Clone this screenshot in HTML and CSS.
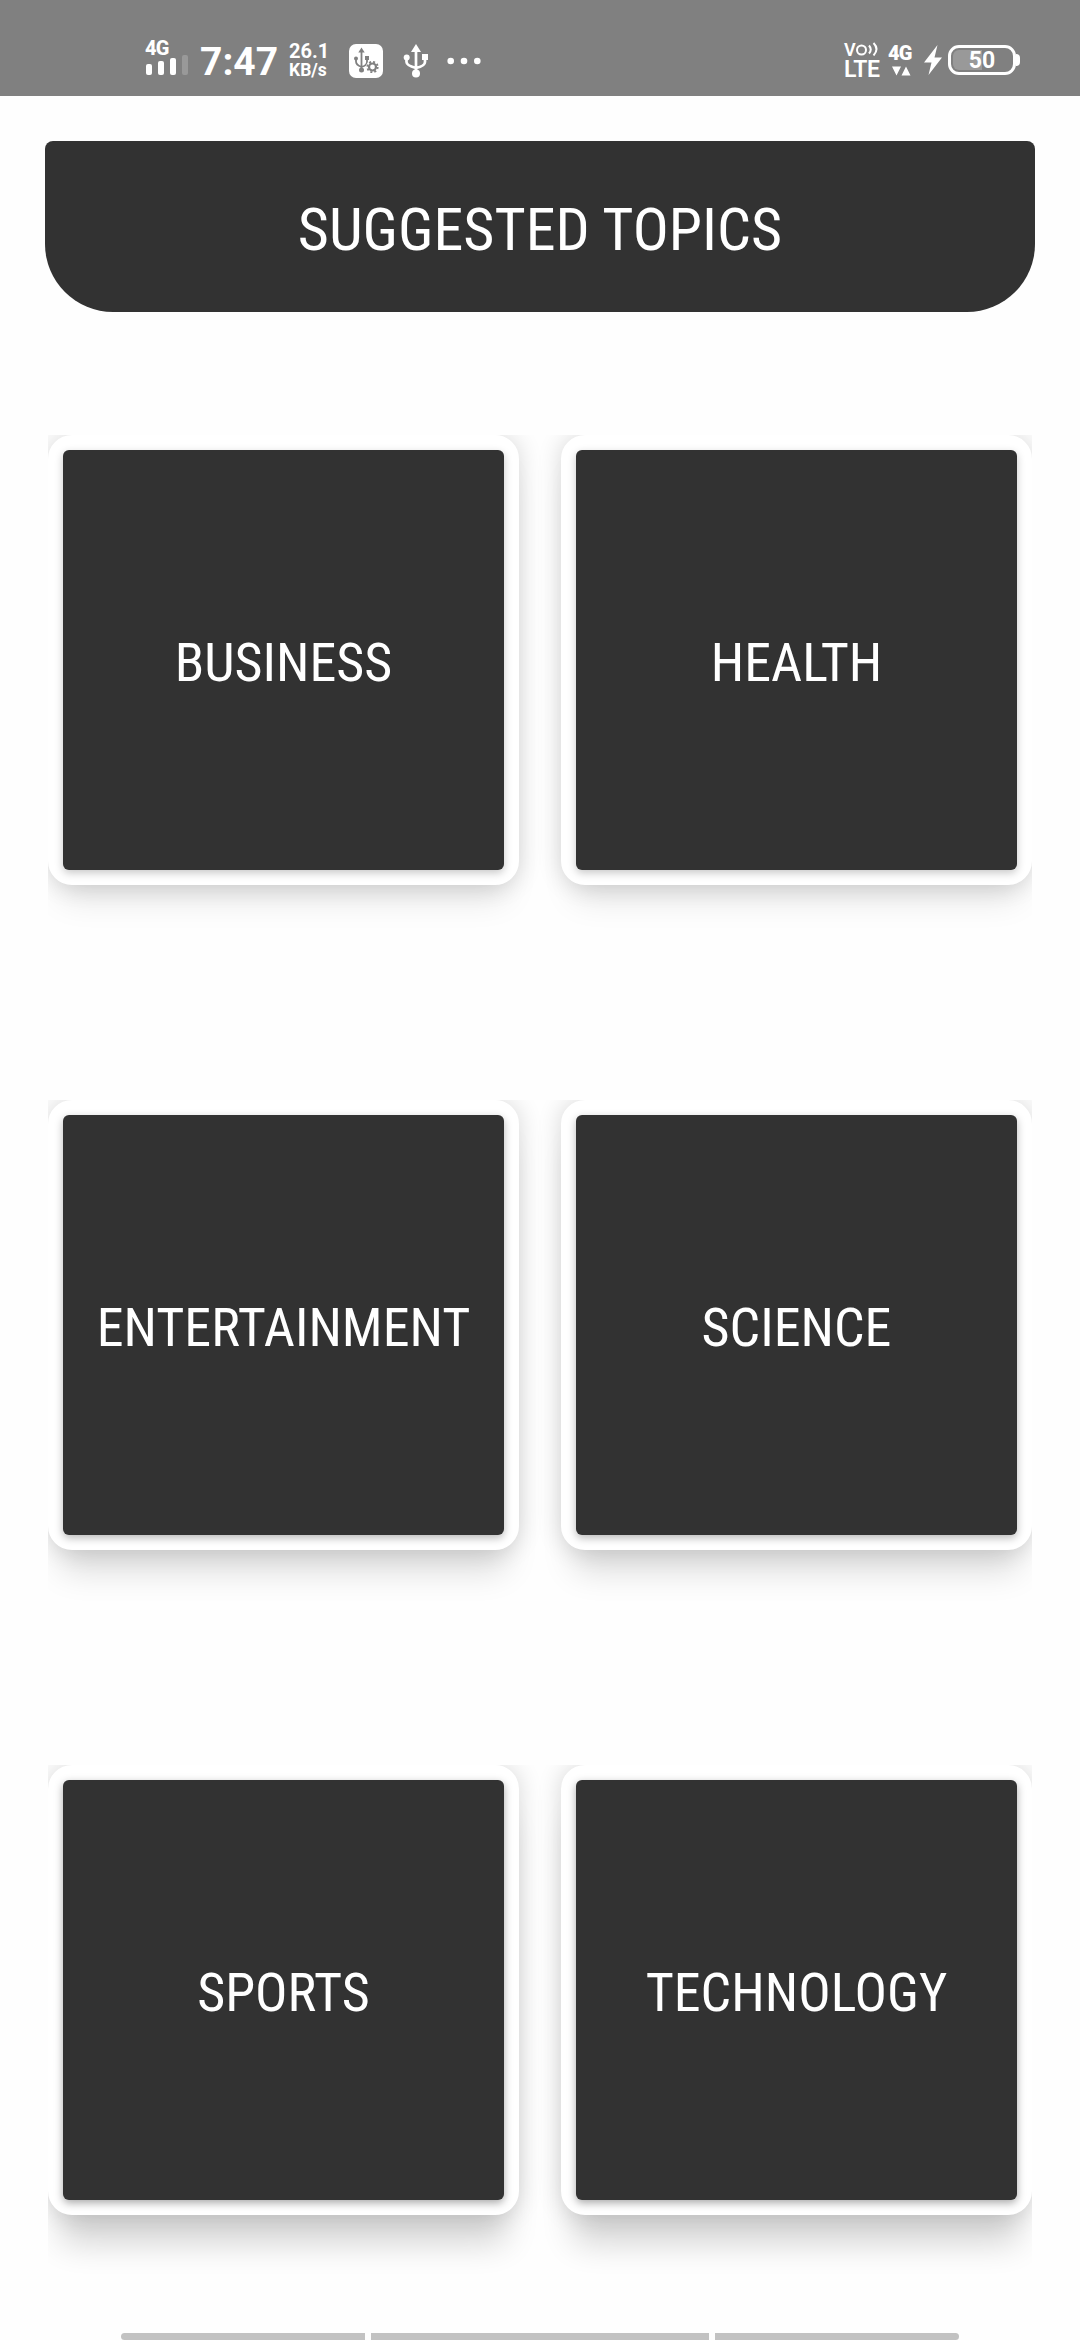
FILE: index.html
```html
<!DOCTYPE html>
<html lang="en">
<head>
<meta charset="utf-8">
<title>Suggested Topics</title>
<link rel="stylesheet" href="styles.css">
</head>
<body>
<div class="screen">
  <header class="status">
    <div class="signal">
      <span class="net">4G</span>
      <svg width="44" height="20" viewBox="0 0 44 20" fill="#fff"><rect x="1" y="9" width="6" height="11" rx="2"/><rect x="13" y="6" width="6" height="14" rx="2"/><rect x="25" y="3" width="6" height="17" rx="2"/><rect x="37" y="0" width="6" height="20" rx="2" opacity=".2"/></svg>
    </div>
    <span class="clock">7:47</span>
    <div class="speed"><span>26.1</span><span>KB/s</span></div>
    <svg class="debug" width="34" height="34" viewBox="0 0 34 34"><rect width="34" height="34" rx="7" fill="#fff"/>
      <g fill="none" stroke="#808080" stroke-width="1.8"><path d="M12.5 6v20M7 15v2.500q0 3.500 5.500 5.500M18 14v4q0 3.500-5.500 5"/></g>
      <g fill="#808080"><path d="M12.500 3.500l3.200 5h-6.400z"/><circle cx="7" cy="14.500" r="2"/><circle cx="12.500" cy="26" r="2.500"/><path d="M16 12h4v4h-4z"/></g>
      <circle cx="23.500" cy="23" r="6.500" fill="#fff"/>
      <circle cx="23.500" cy="23" r="3.500" fill="none" stroke="#808080" stroke-width="2.200"/><circle cx="23.500" cy="23" r="5.200" fill="none" stroke="#808080" stroke-width="1.800" stroke-dasharray="2.040 2.040"/></svg>
    <svg class="usb" width="26" height="34" viewBox="0 0 26 34"><g fill="none" stroke="#fff" stroke-width="2.700"><path d="M13 5v25M3.500 14v4q0 3.500 9.500 6M22 12v6q0 4-9 6"/></g><g fill="#fff"><path d="M13 0l5 8H8z"/><circle cx="3.700" cy="13.500" r="3"/><circle cx="13" cy="29.500" r="4"/><path d="M19 10h6v6h-6z"/></g></svg>
    <svg class="more" width="34" height="8" viewBox="0 0 34 8" fill="#fff"><circle cx="3.700" cy="4" r="3.300"/><circle cx="17" cy="4" r="3.300"/><circle cx="30.300" cy="4" r="3.300"/></svg>
    <div class="volte">
      <div class="vo"><span>V</span><svg width="23" height="14" viewBox="0 0 23 14" fill="none" stroke="#fff" stroke-width="2"><circle cx="5.500" cy="8" r="4.500"/><path d="M13 3.500q3.500 4 0 8M17.500 1q6 6 0 12.500"/></svg></div>
      <span class="lte">LTE</span>
    </div>
    <div class="data"><span>4G</span><svg width="19" height="10" viewBox="0 0 19 10" fill="#fff"><path d="M0 .5h9L4.500 9.500zM9.500 9.500h9L14 .5z"/></svg></div>
    <svg class="bolt" width="18" height="30" viewBox="0 0 18 30" fill="#fff"><path d="M13.500 0L0 17.500h7.500L4.500 30 18 12.500h-7.500z"/></svg>
    <div class="battery"><span>50</span></div>
  </header>
  <main>
    <h1>SUGGESTED TOPICS</h1>
    <section class="row"><button class="card"><span>BUSINESS</span></button><button class="card"><span>HEALTH</span></button></section>
    <section class="row mid"><button class="card"><span>ENTERTAINMENT</span></button><button class="card"><span>SCIENCE</span></button></section>
    <section class="row low"><button class="card"><span>SPORTS</span></button><button class="card"><span>TECHNOLOGY</span></button></section>
  </main>
  <footer class="nav"><i></i><i></i><i></i></footer>
</div>
</body>
</html>
```
FILE: styles.css
```css
* { box-sizing: border-box; }
body { margin: 0; background: #fefefe; font-family: Roboto, sans-serif; color: #fff; }
.screen { position: relative; width: 1080px; height: 2340px; display: flex; flex-direction: column; overflow: hidden; }
svg { display: block; flex: none; }
.status { flex: none; height: 96px; background: #808080; display: flex; align-items: flex-start; padding-left: 145px; font-weight: 700; }
.signal { width: 55px; padding-top: 39px; }
.net { display: block; font-size: 20px; line-height: 18px; height: 16px; letter-spacing: -.8px; font-weight: 800; }
.clock { font-size: 39px; line-height: 40px; margin-top: 42px; width: 89px; }
.speed { width: 60px; margin-top: 41px; display: flex; flex-direction: column; font-size: 20px; line-height: 20px; }
.speed span + span { font-size: 17.5px; line-height: 18px; }
.debug { margin-top: 44px; }
.usb { margin: 44px 0 0 20px; }
.more { margin: 57px 0 0 18px; }
.volte { margin: 42px 0 0 363px; width: 44px; }
.vo { display: flex; height: 17px; font-size: 18px; line-height: 16px; font-weight: 600; }
.lte { display: block; font-size: 23px; line-height: 22px; font-weight: 600; letter-spacing: -.4px; }
.data { width: 36px; margin-top: 42px; font-size: 20px; line-height: 22px; letter-spacing: -.8px; font-weight: 900; }
.data svg { margin: 2px 0 0 4px; }
.bolt { margin-top: 45px; }
.battery { position: relative; margin: 45px 0 0 6px; width: 68px; height: 30px; border: 3px solid #fff; border-radius: 11px; font-size: 23px; line-height: 24px; text-align: center; background: linear-gradient(90deg, #999 50%, transparent 50%) content-box; padding: 2px; }
.battery::after { content: ""; position: absolute; right: -7px; top: 6px; width: 4px; height: 12px; border-radius: 0 4px 4px 0; background: #fff; }
.battery span { display: block; margin-top: -1px; }
main { display: flex; flex-direction: column; padding: 45px 45px 0; }
h1 { margin: 0 0 123px; height: 171px; border-radius: 8px 8px 68px 68px; background: #323232; display: flex; align-items: center; justify-content: center; font-size: 60px; font-weight: 400; padding-top: 5px; }
h1, .card { font-family: "Roboto Condensed", Roboto, sans-serif; font-stretch: 75%; }
.row { height: 570px; margin: 0 3px 95px; overflow: hidden; display: flex; gap: 42px; align-items: flex-start; --y: 27px; --a: .1; --inner: .22; }
.mid { --y: 34px; --a: .13; --inner: .28; }
.low { --y: 41px; --a: .16; --inner: .34; }
.card { flex: 1; height: 450px; border: 15px solid #fff; border-radius: 24px; padding: 0; background: #fff; color: #fff; font-size: 54px; box-shadow: 0 0 24px rgba(0,0,0,.16), 0 var(--y) 32px -12px rgba(0,0,0,var(--a)); display: flex; }
.card span { flex: 1; height: 420px; background: #323232; border-radius: 6px; display: flex; align-items: center; justify-content: center; padding-top: 4px; box-shadow: 0 3px 8px rgba(0,0,0,var(--inner)); }
.nav { position: absolute; left: 121px; top: 2333px; width: 838px; height: 7px; display: flex; gap: 6px; overflow: hidden; border-radius: 4px; }
.nav i { background: #c2c2c2; width: 244px; }
.nav i:nth-child(2) { width: 338px; }
.nav i:last-child { flex: 1; }
```
